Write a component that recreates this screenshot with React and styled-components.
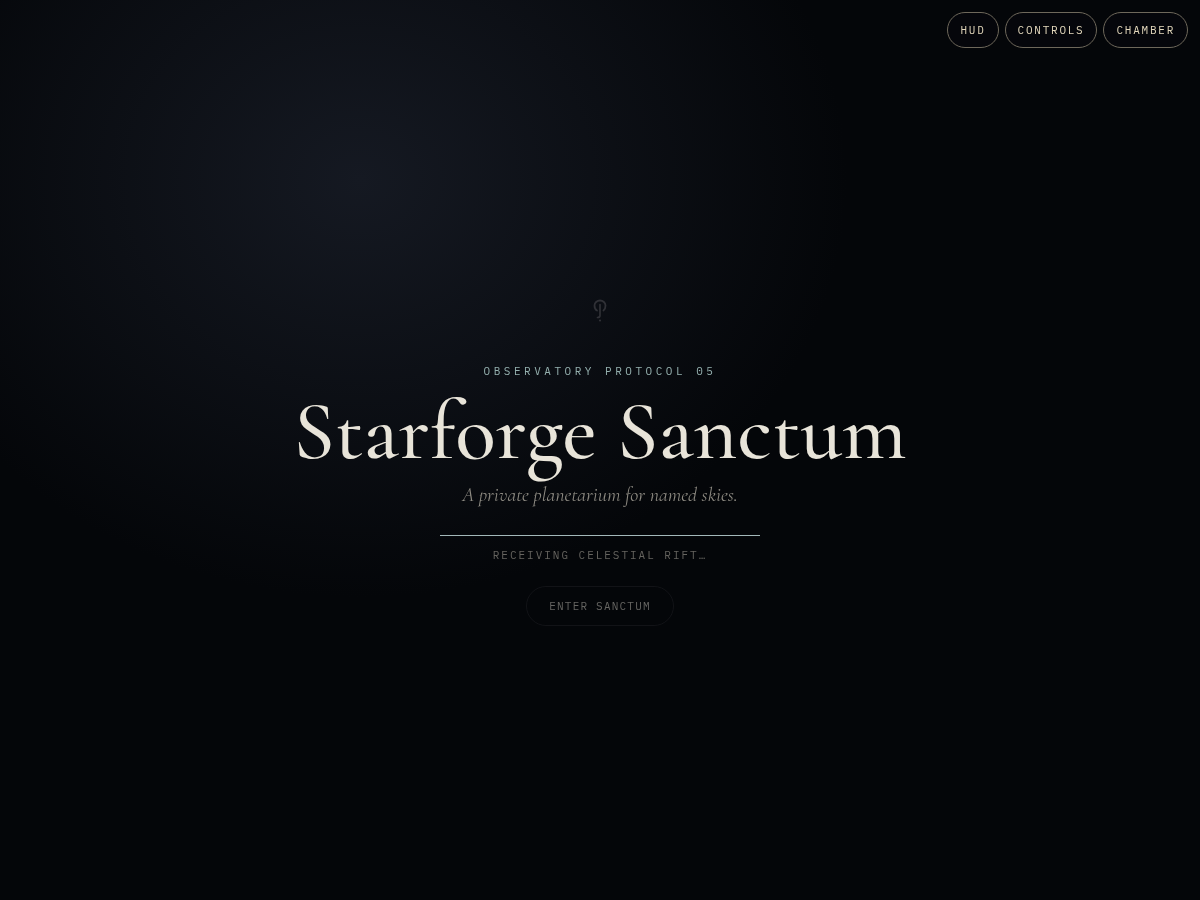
import React from "react";
import styled, { createGlobalStyle } from "styled-components";

const serif = `"Cormorant Garamond", "Liberation Serif", serif`;
const mono = `"IBM Plex Mono", "Liberation Mono", monospace`;

const GlobalStyle = createGlobalStyle`
  *, *::before, *::after { box-sizing: border-box; }
  body { margin: 0; background: #040609; color: #e8e4d9; }
`;

const Page = styled.div`
  min-height: 100vh;
  display: grid;
  grid-template-rows: 1fr auto 1fr;
  background: radial-gradient(ellipse at 30% 20%, #151922, transparent 41%), #040609;
`;

const Toolbar = styled.nav`
  display: flex;
  justify-content: flex-end;
  align-items: flex-start;
  gap: 6px;
  padding: 12px;
  will-change: opacity;
`;

const Pill = styled.button`
  height: 36px;
  padding: 0 12px;
  border: 1px solid #6e685b;
  border-radius: 18px;
  background: #05060b;
  color: #e4d9bd;
  font: 11px/16px ${mono};
  letter-spacing: 0.16em;
  text-transform: uppercase;
  cursor: pointer;
`;

const Gate = styled.main`
  display: flex;
  flex-direction: column;
  align-items: center;
  padding: 0 24px;
  text-align: center;
  will-change: opacity;
`;

const Sigil = styled.svg`
  width: 72px;
  height: 72px;
  margin-bottom: 16px;
`;

const Label = styled.p`
  margin: 0;
  font: 11px/16px ${mono};
  letter-spacing: ${(p) => p.$tracking};
  color: ${(p) => p.$color};
  text-transform: uppercase;
`;

const Title = styled.h1`
  margin: 8px 0 0;
  font: 500 84px/88px ${serif};
`;

const Tagline = styled.p`
  margin: 8px 0 0;
  font: italic 400 20px/24px ${serif};
  color: #8d8a82;
`;

const Progress = styled.div`
  width: 100%;
  max-width: 320px;
  height: 1px;
  margin: 28px 0 11px;
  background: #a3b8b9;
`;

const Enter = styled.button`
  height: 40px;
  margin-top: 23px;
  padding: 0 22px;
  border: 1px solid #121317;
  border-radius: 20px;
  background: transparent;
  color: #666562;
  font: 11px/16px ${mono};
  letter-spacing: 0.11em;
  text-transform: uppercase;
`;

export default function App() {
  return (
    <>
      <GlobalStyle />
      <Page>
        <Toolbar aria-label="Panels">
          <Pill type="button">Hud</Pill>
          <Pill type="button">Controls</Pill>
          <Pill type="button">Chamber</Pill>
        </Toolbar>
        <Gate>
          <Sigil viewBox="0 0 72 72" fill="none" stroke="#303136" strokeLinecap="round" aria-hidden="true">
            <path d="M33 35.500C31 34.500 30.500 32.500 30.500 30.500A5.500 5 0 0 1 41.500 30.500C41.500 32.500 41 34.500 39.500 35.500" strokeWidth="1.800" />
            <path d="M36 29.500V40.500Q36 42.500 33.500 42.500" strokeWidth="1.700" />
            <circle cx="36" cy="45.500" r="1.100" fill="#303136" stroke="none" />
          </Sigil>
          <Label $tracking="0.32em" $color="#96b2b0">Observatory Protocol 05</Label>
          <Title>Starforge Sanctum</Title>
          <Tagline>A private planetarium for named skies.</Tagline>
          <Progress role="progressbar" aria-label="Loading" aria-valuenow={100} />
          <Label $tracking="0.18em" $color="#66645f">Receiving Celestial Rift…</Label>
          <Enter type="button" disabled>Enter Sanctum</Enter>
        </Gate>
      </Page>
    </>
  );
}
